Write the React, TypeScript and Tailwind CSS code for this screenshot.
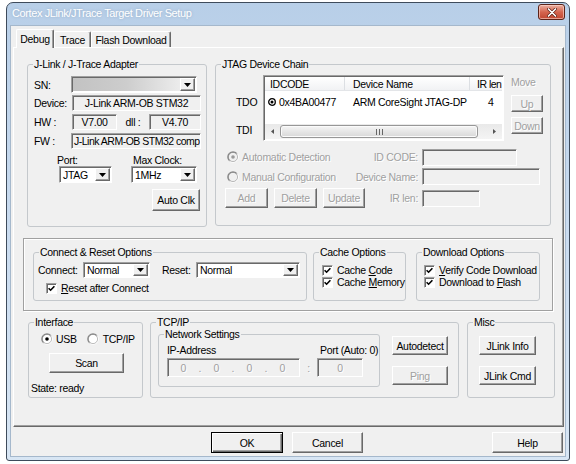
import React from 'react';

const raised =
  'bg-[#f0f0f0] border border-t-white border-l-white border-r-[#696969] border-b-[#696969] shadow-[inset_-1px_-1px_0_#a0a0a0]';
const primary =
  'bg-[#f0f0f0] border border-black shadow-[inset_1px_1px_0_#ffffff,inset_-1px_-1px_0_#696969,inset_-2px_-2px_0_#a0a0a0]';
const sunken =
  'border border-t-[#a0a0a0] border-l-[#a0a0a0] border-r-white border-b-white shadow-[inset_1px_1px_0_#696969]';
const dis = 'text-[#a0a0a0] [text-shadow:1px_1px_0_#ffffff]';

type Kids = { children?: React.ReactNode; className?: string };

function Btn({ children, className = '', disabled = false, def = false }: Kids & { disabled?: boolean; def?: boolean }) {
  return (
    <div
      className={`${def ? primary : raised} flex items-center justify-center whitespace-nowrap ${disabled ? dis : ''} ${className}`}
    >
      {children}
    </div>
  );
}

function Field({ children, className = '' }: Kids) {
  return (
    <div className={`${sunken} bg-[#f0f0f0] flex items-center overflow-hidden whitespace-nowrap ${className}`}>
      {children}
    </div>
  );
}

function Arrow() {
  return (
    <svg width="7" height="4" viewBox="0 0 7 4">
      <path d="M0 0h7L3.5 4z" fill="#000" />
    </svg>
  );
}

function Combo({ value, className = '', blank = false }: { value?: string; className?: string; blank?: boolean }) {
  return (
    <div className={`${sunken} bg-white flex items-stretch p-[1px] ${className}`}>
      <div
        className={`flex-1 flex items-center pl-[2px] overflow-hidden whitespace-nowrap ${
          blank ? 'bg-linear-to-r from-[#c2c2c2] via-[#cdcdcd] to-[#ececec]' : ''
        }`}
      >
        {value}
      </div>
      <div className={`${raised} w-[15px] flex items-center justify-center`}>
        <Arrow />
      </div>
    </div>
  );
}

function Radio({ checked = false, disabled = false }: { checked?: boolean; disabled?: boolean }) {
  return (
    <svg width="12" height="12" viewBox="0 0 12 12" className="shrink-0">
      <defs>
        <linearGradient id="radioRim" x1="0" y1="0" x2="1" y2="1">
          <stop offset="0.45" stopColor="#8a8a8a" />
          <stop offset="0.6" stopColor="#ffffff" />
        </linearGradient>
      </defs>
      <circle cx="6" cy="6" r="5.8" fill="url(#radioRim)" />
      <circle cx="6" cy="6" r="4.6" fill={disabled ? '#f0f0f0' : '#ffffff'} stroke="#5a5a5a" strokeWidth="0.4" />
      {checked && <circle cx="6" cy="6" r="1.8" fill={disabled ? '#9a9a9a' : '#000000'} />}
    </svg>
  );
}

function Check({ children }: Kids) {
  return (
    <div className="flex items-center h-[12px]">
      <div className={`${sunken} bg-white w-[11px] h-[11px] flex items-center justify-center shrink-0`}>
        <svg width="7" height="7" viewBox="0 0 7 7">
          <path d="M0.6 3.2 L2.6 5.2 L6.4 1.2" stroke="#000" strokeWidth="1.6" fill="none" />
        </svg>
      </div>
      <span className="ml-[4px] whitespace-nowrap">{children}</span>
    </div>
  );
}

function Group({ title, className = '', children }: Kids & { title: string }) {
  return (
    <fieldset className={`border border-[#c4c8cc] rounded-[3px] min-w-0 shrink-0 ${className}`}>
      <legend className="ml-[5px] px-[1px] leading-[13px] h-[13px] whitespace-nowrap">{title}</legend>
      {children}
    </fieldset>
  );
}

function Tab({ children, active = false, className = '' }: Kids & { active?: boolean }) {
  return (
    <div
      className={`bg-[#f0f0f0] border-l border-t border-r border-l-white border-t-white border-r-[#696969] shadow-[inset_-1px_0_0_#a0a0a0] rounded-t-[2px] flex items-center justify-center whitespace-nowrap ${
        active ? 'relative z-10 -mb-px h-[19px]' : 'h-[16px]'
      } ${className}`}
    >
      {children}
    </div>
  );
}

function ListView() {
  return (
    <div className={`${sunken} bg-white w-[241px] h-[66px] flex flex-col p-[1px] overflow-hidden shrink-0`}>
      <div className="h-[14px] flex shrink-0 bg-linear-to-b from-white to-[#f1f2f4] border-b border-[#e3e5e8]">
        <div className="w-[80px] pl-[5px] border-r border-[#dcdfe3] flex items-center">IDCODE</div>
        <div className="w-[125px] pl-[8px] border-r border-[#dcdfe3] flex items-center">Device Name</div>
        <div className="flex-1 pl-[7px] flex items-center whitespace-nowrap tracking-[-0.5px]">IR len</div>
      </div>
      <div className="h-[16px] mt-[3px] flex items-center shrink-0">
        <div className="w-[80px] flex items-center pl-[3px]">
          <svg width="8" height="8" viewBox="0 0 8 8" className="shrink-0">
            <circle cx="4" cy="4" r="3.3" fill="none" stroke="#000" strokeWidth="1.3" />
            <circle cx="4" cy="4" r="1.5" fill="#000" />
          </svg>
          <span className="ml-[3px]">0x4BA00477</span>
        </div>
        <div className="w-[125px] pl-[8px] whitespace-nowrap">ARM CoreSight JTAG-DP</div>
        <div className="flex-1 pl-[18px]">4</div>
      </div>
      <div className="mt-auto h-[15px] flex items-center bg-linear-to-b from-[#e9e9e9] to-[#f4f4f4] shrink-0">
        <div className="w-[15px] h-full flex items-center justify-center">
          <svg width="3" height="5" viewBox="0 0 3 5">
            <path d="M3 0v5L0 2.5z" fill="#555" />
          </svg>
        </div>
        <div className="w-[198px] h-[13px] rounded-[3px] border border-[#979797] bg-linear-to-b from-[#f5f5f5] to-[#d8d8d8] shadow-[inset_0_0_0_1px_#fbfbfb] flex items-center justify-center gap-[2px]">
          <span className="w-px h-[6px] bg-[#666]" />
          <span className="w-px h-[6px] bg-[#666]" />
          <span className="w-px h-[6px] bg-[#666]" />
        </div>
        <div className="flex-1" />
        <div className="w-[16px] h-full flex items-center justify-center">
          <svg width="3" height="5" viewBox="0 0 3 5">
            <path d="M0 0v5L3 2.5z" fill="#555" />
          </svg>
        </div>
      </div>
    </div>
  );
}

function JLinkAdapter() {
  return (
    <Group title="J-Link / J-Trace Adapter" className="ml-[13px] w-[180px] h-[169px]">
      <div className="flex flex-col pl-[6px]">
        <div className="mt-[5px] h-[17px] flex items-center">
          <div className="w-[37px]">SN:</div>
          <Combo blank className="w-[126px] h-[17px]" />
        </div>
        <div className="mt-[2px] h-[16px] flex items-center">
          <div className="w-[38px]">Device:</div>
          <Field className="w-[129px] h-[16px] justify-center">J-Link ARM-OB STM32</Field>
        </div>
        <div className="mt-[3px] h-[16px] flex items-center">
          <div className="w-[38px]">HW :</div>
          <Field className="w-[45px] h-[16px] justify-center">V7.00</Field>
          <div className="w-[32px] text-center">dll :</div>
          <Field className="w-[52px] h-[16px] justify-center">V4.70</Field>
        </div>
        <div className="mt-[3px] h-[16px] flex items-center">
          <div className="w-[37px]">FW :</div>
          <Field className="w-[130px] h-[16px] pl-[2px] tracking-[-0.5px]">J-Link ARM-OB STM32 comp</Field>
        </div>
        <div className="flex -ml-[6px]">
          <div className="ml-[31px] w-[53px] flex flex-col">
            <div className="mt-[5px] h-[12px] -ml-[2px]">Port:</div>
            <Combo value="JTAG" className="h-[17px]" />
          </div>
          <div className="ml-[19px] w-[66px] flex flex-col">
            <div className="mt-[5px] h-[12px] ml-[2px] whitespace-nowrap">Max Clock:</div>
            <Combo value="1MHz" className="h-[17px]" />
          </div>
        </div>
        <Btn className="mt-[6px] ml-[118px] w-[48px] h-[22px]">Auto Clk</Btn>
      </div>
    </Group>
  );
}

function JtagChain() {
  return (
    <Group title="JTAG Device Chain" className="ml-[8px] w-[336px] h-[168px]">
      <div className="flex mt-[4px]">
        <div className="w-[47px] pl-[20px] flex flex-col shrink-0">
          <div className="mt-[21px] h-[12px]">TDO</div>
          <div className="mt-[16px] h-[12px]">TDI</div>
        </div>
        <ListView />
        <div className="ml-[7px] w-[32px] flex flex-col shrink-0">
          <div className={`h-[12px] mt-[1px] ${dis}`}>Move</div>
          <Btn disabled className="mt-[7px] h-[17px]">
            Up
          </Btn>
          <Btn disabled className="mt-[5px] h-[17px]">
            Down
          </Btn>
        </div>
      </div>
      <div className="ml-[9px] mt-[7px] w-[315px] flex flex-col">
        <div className="h-[18px] flex items-center">
          <div className="flex items-center pl-[2px]">
            <Radio checked disabled />
            <span className={`ml-[3px] ${dis}`}>Automatic Detection</span>
          </div>
          <div className={`ml-auto mr-[4px] ${dis}`}>ID CODE:</div>
          <div className="w-[118px]">
            <Field className="w-[95px] h-[17px]" />
          </div>
        </div>
        <div className="mt-[1px] h-[19px] flex items-center">
          <div className="flex items-center pl-[2px]">
            <Radio disabled />
            <span className={`ml-[3px] ${dis}`}>Manual Configuration</span>
          </div>
          <div className={`ml-auto mr-[4px] ${dis}`}>Device Name:</div>
          <div className="w-[118px]">
            <Field className="w-[118px] h-[17px]" />
          </div>
        </div>
        <div className="mt-[2px] h-[20px] flex items-center">
          <Btn disabled className="w-[43px] h-[20px]">
            Add
          </Btn>
          <Btn disabled className="ml-[6px] w-[43px] h-[20px]">
            Delete
          </Btn>
          <Btn disabled className="ml-[6px] w-[42px] h-[20px]">
            Update
          </Btn>
          <div className={`ml-auto mr-[4px] ${dis}`}>IR len:</div>
          <div className="w-[118px]">
            <Field className="w-[58px] h-[17px]" />
          </div>
        </div>
      </div>
    </Group>
  );
}

function OptionsFrame() {
  return (
    <div className="ml-[9px] mt-[11px] w-[530px] h-[73px] shrink-0 border border-[#a0a0a0] shadow-[inset_1px_1px_0_#ffffff,1px_1px_0_#ffffff] flex items-start pt-[7px] pl-[9px]">
      <Group title="Connect & Reset Options" className="w-[274px] h-[55px]">
        <div className="mt-[3px] h-[16px] flex items-center pl-[4px]">
          <div className="w-[45px]">Connect:</div>
          <Combo value="Normal" className="w-[67px] h-[16px]" />
          <div className="ml-[12px] w-[34px]">Reset:</div>
          <Combo value="Normal" className="w-[104px] h-[16px]" />
        </div>
        <div className="mt-[4px] pl-[12px]">
          <Check>
            <span className="underline">R</span>eset after Connect
          </Check>
        </div>
      </Group>
      <Group title="Cache Options" className="ml-[6px] w-[93px] h-[55px]">
        <div className="mt-[5px] pl-[8px] flex flex-col">
          <Check>
            Cache <span className="underline">C</span>ode
          </Check>
          <Check>
            Cache <span className="underline">M</span>emory
          </Check>
        </div>
      </Group>
      <Group title="Download Options" className="ml-[10px] w-[124px] h-[55px]">
        <div className="mt-[5px] pl-[7px] flex flex-col">
          <Check>
            <span className="underline">V</span>erify Code Download
          </Check>
          <Check>
            Download to <span className="underline">F</span>lash
          </Check>
        </div>
      </Group>
    </div>
  );
}

function BottomRow() {
  const ip = ['0', '.', '0', '.', '0', '.', '0'];
  return (
    <div className="mt-[5px] flex items-start shrink-0">
      <Group title="Interface" className="ml-[14px] w-[115px] h-[82px]">
        <div className="mt-[4px] h-[12px] flex items-center pl-[12px]">
          <Radio checked />
          <span className="ml-[3px]">USB</span>
          <span className="ml-[10px] flex items-center">
            <Radio />
            <span className="ml-[4px]">TCP/IP</span>
          </span>
        </div>
        <Btn className="mt-[8px] ml-[20px] w-[75px] h-[20px]">Scan</Btn>
        <div className="mt-[9px] pl-[2px] h-[12px]">State: ready</div>
      </Group>
      <Group title="TCP/IP" className="ml-[7px] w-[309px] h-[82px]">
        <div className="flex items-start">
          <Group title="Network Settings" className="ml-[7px] -mt-px w-[222px] h-[59px]">
            <div className="mt-[3px] h-[12px] flex pl-[8px]">
              <div className="w-[153px]">IP-Address</div>
              <div className="whitespace-nowrap">Port (Auto: 0)</div>
            </div>
            <div className="mt-[2px] h-[19px] flex items-center pl-[8px]">
              <Field className={`w-[133px] h-[19px] pl-[7px] ${dis}`}>
                {ip.map((c, i) => (
                  <span key={i} className="w-[16.5px] text-center">
                    {c}
                  </span>
                ))}
              </Field>
              <div className={`w-[17px] text-center ${dis}`}>:</div>
              <Field className={`w-[46px] h-[19px] justify-center ${dis}`}>0</Field>
            </div>
          </Group>
          <div className="ml-[12px] pt-[7px] w-[56px] flex flex-col">
            <Btn className="h-[19px]">Autodetect</Btn>
            <Btn disabled className="mt-[11px] h-[19px]">
              Ping
            </Btn>
          </div>
        </div>
      </Group>
      <Group title="Misc" className="ml-[8px] w-[88px] h-[82px]">
        <div className="pl-[11px] pt-[7px] flex flex-col w-[68px]">
          <Btn className="h-[19px]">JLink Info</Btn>
          <Btn className="mt-[11px] h-[19px]">JLink Cmd</Btn>
        </div>
      </Group>
    </div>
  );
}

export default function App() {
  return (
    <div className="w-[576px] h-[464px] bg-white pt-[2px] pl-[6px] [font-family:'Liberation_Sans',Arial,sans-serif] text-[10.5px] leading-[12px] tracking-[-0.3px] text-black">
      <div className="w-[564px] h-[459px] border border-[#3e4b5b] rounded-t-[7px] rounded-b-[3px] bg-linear-to-b from-[#b8cfe8] via-[#cadcf0] to-[#d8e6f4] px-[4px] pb-[4px] flex flex-col">
        {/* title bar */}
        <div className="h-[23px] flex items-start shrink-0">
          <div className="mt-[3px] pl-[1px] text-[11px] leading-[14px] tracking-[-0.4px] text-white [text-shadow:0_0_3px_#8ea7c2]">
            Cortex JLink/JTrace Target Driver Setup
          </div>
          <div className="ml-auto mt-[1px] w-[27px] h-[16px] rounded-[3px] border border-[#5b2318] bg-linear-to-b from-[#eab0a2] via-[#d4654f] to-[#c04630] shadow-[inset_0_0_0_1px_rgba(255,220,210,0.6)] flex items-center justify-center">
            <svg width="10" height="9" viewBox="0 0 10 9">
              <path d="M1.5 1 L8.5 8 M8.5 1 L1.5 8" stroke="#5a1d12" strokeWidth="3" strokeLinecap="round" />
              <path d="M1.5 1 L8.5 8 M8.5 1 L1.5 8" stroke="#ffffff" strokeWidth="1.7" strokeLinecap="round" />
            </svg>
          </div>
        </div>

        {/* client area */}
        <div className="flex-1 bg-[#f0f0f0] flex flex-col pt-[3px] shadow-[0_0_0_1px_#a5b8cc]">
          <div className="h-[18px] flex items-end pl-[5px] shrink-0">
            <Tab active className="w-[38px]">
              Debug
            </Tab>
            <Tab className="w-[37px]">Trace</Tab>
            <Tab className="w-[80px]">Flash Download</Tab>
          </div>

          <div className="ml-[2px] w-[551px] h-[380px] shrink-0 border border-t-white border-l-white border-r-[#696969] border-b-[#696969] shadow-[inset_-1px_-1px_0_#a0a0a0] flex flex-col">
            <div className="mt-[10px] flex items-start shrink-0">
              <JLinkAdapter />
              <JtagChain />
            </div>
            <OptionsFrame />
            <BottomRow />
          </div>

          <div className="mt-[5px] h-[21px] flex shrink-0">
            <Btn def className="ml-[200px] w-[72px]">
              OK
            </Btn>
            <Btn className="ml-[9px] w-[71px]">Cancel</Btn>
            <Btn className="ml-auto mr-[2px] w-[71px]">Help</Btn>
          </div>
        </div>
      </div>
    </div>
  );
}
